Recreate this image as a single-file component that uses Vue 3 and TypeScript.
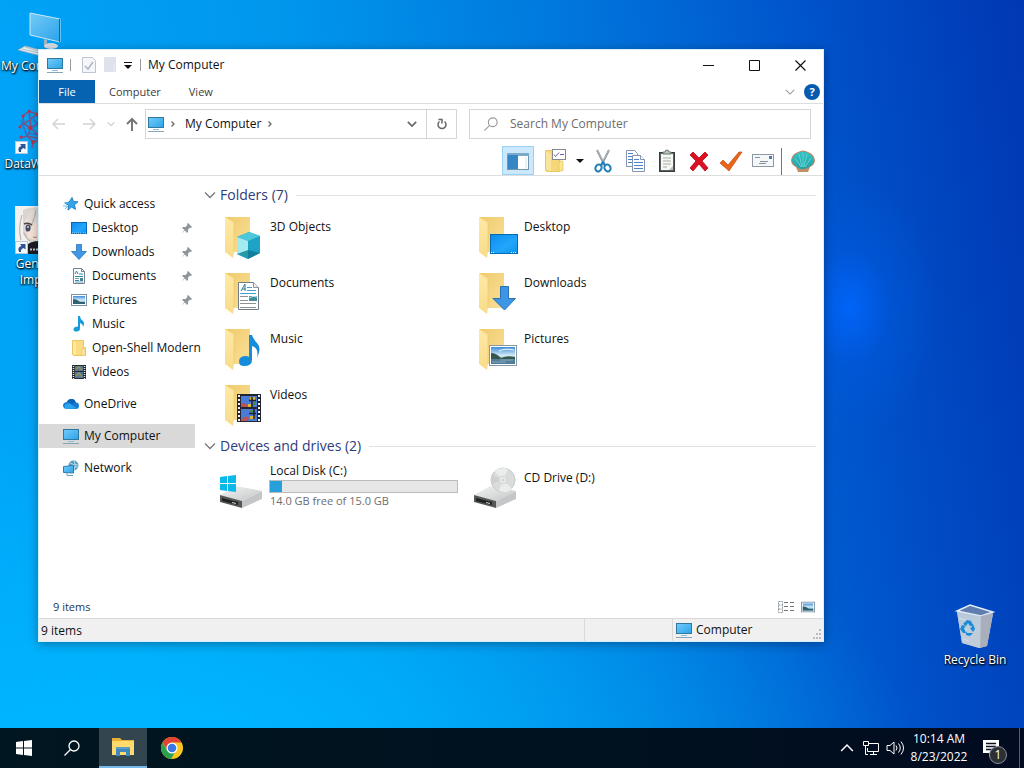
<script setup lang="ts">
import { computed, ref } from 'vue'

interface NavItem { label: string; icon: string; pinned?: boolean; level: 'root' | 'child' }
interface Tile { label: string; icon: string }
interface Tool { label: string; icon: string; pressed?: boolean }

const shortcuts: Tile[] = [
  { label: 'My Computer', icon: 'pc-large' },
  { label: 'DataWarrior', icon: 'molecule' },
  { label: 'Genshin Impact', icon: 'portrait' },
]

const navItems: NavItem[] = [
  { label: 'Quick access', icon: 'star', level: 'root' },
  { label: 'Desktop', icon: 'desktop', pinned: true, level: 'child' },
  { label: 'Downloads', icon: 'arrow', pinned: true, level: 'child' },
  { label: 'Documents', icon: 'document', pinned: true, level: 'child' },
  { label: 'Pictures', icon: 'picture', pinned: true, level: 'child' },
  { label: 'Music', icon: 'note', level: 'child' },
  { label: 'Open-Shell Modern', icon: 'folder', level: 'child' },
  { label: 'Videos', icon: 'film', level: 'child' },
  { label: 'OneDrive', icon: 'cloud', level: 'root' },
  { label: 'My Computer', icon: 'monitor', level: 'root' },
  { label: 'Network', icon: 'network', level: 'root' },
]
const selected = ref('monitor')

const folders: Tile[] = [
  { label: '3D Objects', icon: 'big-cube' },
  { label: 'Desktop', icon: 'big-desktop' },
  { label: 'Documents', icon: 'big-document' },
  { label: 'Downloads', icon: 'big-arrow' },
  { label: 'Music', icon: 'big-note' },
  { label: 'Pictures', icon: 'big-picture' },
  { label: 'Videos', icon: 'big-film' },
]

const editTools: Tool[] = [
  { label: 'Cut', icon: 'cut' },
  { label: 'Copy', icon: 'copy' },
  { label: 'Paste', icon: 'paste' },
  { label: 'Delete', icon: 'delete' },
  { label: 'Properties', icon: 'check' },
  { label: 'Email', icon: 'mail' },
]

const disk = { free: 14, total: 15 }
const usedPercent = computed(() => ((disk.total - disk.free) / disk.total) * 100)
const itemCount = computed(() => folders.length + 2)
const query = ref('')
</script>

<template>
  <svg class="sprite" aria-hidden="true">
    <defs>
      <linearGradient id="g-screen" x1="0" y1="0" x2="1" y2="1"><stop offset="0" stop-color="#73cbf8" /><stop offset="1" stop-color="#2ba3ea" /></linearGradient>
      <linearGradient id="g-blue" x1="0" y1="0" x2="1" y2="1"><stop offset="0" stop-color="#0c8cf0" /><stop offset=".6" stop-color="#22a6fb" /><stop offset="1" stop-color="#0a94f4" /></linearGradient>
      <linearGradient id="g-back" x1="0" y1="0" x2="1" y2="1"><stop offset="0" stop-color="#f0cb6c" /><stop offset="1" stop-color="#fbe09a" /></linearGradient>
      <linearGradient id="g-flap" x1="0" y1="0" x2="0" y2="1"><stop offset="0" stop-color="#ffe9a6" /><stop offset="1" stop-color="#f8dc8a" /></linearGradient>
      <linearGradient id="g-sky" x1="0" y1="0" x2="0" y2="1"><stop offset="0" stop-color="#3f8ed8" /><stop offset=".5" stop-color="#d3ebf7" /><stop offset="1" stop-color="#5c93b0" /></linearGradient>
      <linearGradient id="g-metal" x1="0" y1="0" x2="1" y2="1"><stop offset="0" stop-color="#f4f4f4" /><stop offset="1" stop-color="#c3c5c6" /></linearGradient>
      <linearGradient id="g-bin" x1="0" y1="0" x2="0" y2="1"><stop offset="0" stop-color="#a9c3df" /><stop offset="1" stop-color="#d8d7d5" /></linearGradient>
      <linearGradient id="g-shell" x1="0" y1="0" x2="0" y2="1"><stop offset="0" stop-color="#31c4c8" /><stop offset="1" stop-color="#2a9ea3" /></linearGradient>
    </defs>

    <symbol id="monitor" viewBox="0 0 16 16"><rect x=".5" y="1.500" width="15" height="10" fill="url(#g-screen)" stroke="#31789f" /><path d="M5 13.500h6" stroke="#8ac0dc" /><path d="M0 15.500h16" stroke="#8aa4b4" /></symbol>
    <symbol id="pc-large" viewBox="0 0 48 48"><path d="M15 5l30 6v23l-30-7z" fill="url(#g-screen)" stroke="#c9e8f7" /><path d="M44.500 11v23" stroke="#275f8c" /><path d="M32 32v6l-3 1v-8z" fill="#9fb7c6" /><ellipse cx="36" cy="38" rx="7" ry="3" fill="#d7dfe4" /><path d="M3 42l7-4 23 6-7 4z" fill="#e7edf0" stroke="#8baabd" stroke-width=".8" /><path d="M7 41l22 5M10 39l20 6" stroke="#9fb2bd" stroke-width=".8" /></symbol>
    <symbol id="molecule" viewBox="0 0 48 48"><g fill="none" stroke="#8f4773" stroke-width="1.500" opacity=".85"><path d="M8 10l6-5 8 3 2 9-8 5-7-4zM16 22l-4 8 6 6 9-3M22 8l8-4M24 17l10 4M9 17l-5 4M12 30l-7 2M18 36l-1 6M14 5l2 17M9 18l13-10M12 30l15 3M16 22l11 11" /></g><g fill="none" stroke="#4a62b4" stroke-width="1.500" opacity=".8"><path d="M18 13l9 12M13 27l10 2M27 25l8-6M27 32l7 7M6 14l6 16" /></g><g fill="#b9344c"><circle cx="8" cy="10" r="1.500" /><circle cx="14" cy="5" r="1.500" /><circle cx="5" cy="21" r="1.500" /><circle cx="15" cy="22" r="2" /><circle cx="18" cy="36" r="2" /><circle cx="22" cy="8" r="1.500" /><circle cx="24" cy="17" r="2" /><circle cx="6" cy="31" r="1.500" /></g></symbol>
    <symbol id="portrait" viewBox="0 0 48 48"><rect width="48" height="48" fill="#f3f1ef" /><path d="M8 4q6-4 38-2v42H34l-16-4-10-12z" fill="#dcd5cf" /><path d="M10 16q3-9 14-12l20 8v24H26L13 32z" fill="#f9e4d9" /><path d="M25 2q-2 16-15 26 0-16 6-24zM25 2q4 12 19 16V0z" fill="#e4ded8" /><path d="M21 4q-2 14-10 22M27 3q3 9 12 14M7 9Q3 22 6 34M9 27q2 6 6 8" fill="none" stroke="#b3a8a3" /><ellipse cx="13" cy="22" rx="2.500" ry="3.500" fill="#434865" /><circle cx="13" cy="21" r="1" fill="#cfd7e8" /><path d="M9 18q4-2 8 1" stroke="#4f4345" stroke-width="1.500" fill="none" /><path d="M18 31q2 1 4 0" stroke="#bf7c6c" fill="none" /><path d="M13 38q9-6 35-1v11H13z" fill="#1b1c25" /><path d="M15 43.500h9" stroke="#c8c7ca" stroke-width="2" stroke-dasharray="2 1" /></symbol>
    <symbol id="shortcut" viewBox="0 0 13 13"><rect x=".5" y=".5" width="12" height="12" fill="#f6fafd" stroke="#b3c8d8" /><path d="M4 11Q2 6 6.500 5L5 3h5.500v5.500L8.500 7Q5.500 8 6 11z" fill="#2d5595" /></symbol>

    <symbol id="star" viewBox="0 0 16 16"><path d="M9 1.500l1.500 4 4.500.3-3.500 3 1 4.500-4-2.200-3.500 3 .5-4.600L2 7l4.300-1z" fill="#37a4e8" stroke="#2384c6" /><path d="M1 7h4M0 10h4M2 13l3-3" stroke="#6dbfee" /></symbol>
    <symbol id="desktop" viewBox="0 0 16 16"><rect x=".5" y="2.500" width="15" height="11" fill="url(#g-blue)" stroke="#0966b5" /><path d="M1 13h10M12 13h3" stroke="#a7d7f6" stroke-dasharray="1 1" /></symbol>
    <symbol id="arrow" viewBox="0 0 16 16"><path d="M5.500.500h5v7h5L8 15.500.500 7.500h5z" fill="#3f97e6" stroke="#2875b7" stroke-width=".8" /></symbol>
    <symbol id="document" viewBox="0 0 16 16"><path d="M2.500.500h8l3 3v12h-11z" fill="#fff" stroke="#75828a" /><path d="M10.500.500v3h3" fill="none" stroke="#75828a" /><path d="M4 6l1.500-3L7 6M4 8.500h8M4 12.500h4M8 6h4" stroke="#2f8ca9" fill="none" /><path d="M4 10.500h4M4 14h8" stroke="#6d9eb2" /><rect x="9" y="10" width="3" height="3" fill="#418494" /></symbol>
    <symbol id="picture" viewBox="0 0 16 16"><rect x=".5" y="2.500" width="15" height="11" fill="#fff" stroke="#7993a6" /><rect x="2" y="4" width="12" height="8" fill="url(#g-sky)" /><path d="M2 7q4 0 7 3h5v2H2z" fill="#315f72" /></symbol>
    <symbol id="note" viewBox="0 0 16 16"><path d="M7 0h2q0 3 3 5 2 2 0 6 0-3-3-4v5.500q0 3-3.500 3-3 0-3-2 0-3 4.500-3z" fill="#189ade" /></symbol>
    <symbol id="folder" viewBox="0 0 16 16"><path d="M1.500.500h11v7h2v8H3l-1.500-1z" fill="#fbdc83" stroke="#edc85f" /><path d="M11 8.500h3v7h-3z" fill="#ffe9aa" stroke="#e6c15c" stroke-width=".6" /><path d="M2 1l3 2v12l-3-1z" fill="#ffe9a2" /></symbol>
    <symbol id="film" viewBox="0 0 16 16"><rect x="1" y="1" width="14" height="14" fill="#242931" /><path d="M4 2h8v5H4zM4 8h8v6H4z" fill="#5c7795" /><path d="M5 5l3-2 3 3M5 12l3-3 3 4" stroke="#8e9454" stroke-width="1.500" fill="none" /><path d="M2.500 2v13M13.500 2v13" stroke="#e4e4e4" stroke-width="1.500" stroke-dasharray="1 1" /></symbol>
    <symbol id="cloud" viewBox="0 0 16 16"><path d="M5 13Q0 13 0 9.500 0 6.500 4 6q1-3 5-3 3 0 4 3.500 3 0 3 3 0 3.500-3 3.500z" fill="#1479cf" /><path d="M4 13q-4-1-2-4.500L6 7l8 5.500z" fill="#2aa5ec" /><path d="M4 6q3 0 5 2l3-1.500Q12 3 8.500 3 5 3 4 6" fill="#0863b5" /></symbol>
    <symbol id="network" viewBox="0 0 16 16"><circle cx="10.500" cy="5.500" r="5" fill="#5a9cc0" /><path d="M7 3q3 2 8 2M11 1q3 4 0 9M6 7h9" stroke="#b5dbea" fill="none" /><path d="M.500 6.500l10-1v7.500l-10-.5z" fill="url(#g-screen)" stroke="#2d7dab" /><path d="M4 13v2.500h6" fill="none" stroke="#6ca2bd" /></symbol>
    <symbol id="pin" viewBox="0 0 12 12"><path d="M7 1l4 4-1 1-1-.5L7 7.500 7 10 6 11 4 8.500.800 11.500 3.500 8 1 6l1-1h2.500l2-2L6 2z" fill="#8c969e" /></symbol>

    <symbol id="big-folder" viewBox="0 0 48 48"><path d="M7 4h25v35H15z" fill="url(#g-back)" /><path d="M7 4l9 6v29l-1 6-8-6z" fill="url(#g-flap)" /><path d="M16 10v28" stroke="#edc86c" stroke-width=".7" /></symbol>
    <symbol id="big-cube" viewBox="0 0 48 48"><use href="#big-folder" /><path d="M19 24l12-5 11 4v17l-12 6-11-5z" fill="#1ea3c6" /><path d="M19 24l12-5 11 4-12 5z" fill="#4dc7da" /><path d="M19 24l11 4v18l-11-5z" fill="#a4ebef" /><path d="M19 41l11-4v9z" fill="#2699a7" /><path d="M30 37l12 3-12 6z" fill="#127f9b" /></symbol>
    <symbol id="big-desktop" viewBox="0 0 48 48"><use href="#big-folder" /><rect x="18.500" y="21.500" width="27" height="19" fill="url(#g-blue)" stroke="#0869ad" /><path d="M19 39.500h3M39 39.500h6" stroke="#e6f6ff" stroke-dasharray="1 1" /></symbol>
    <symbol id="big-document" viewBox="0 0 48 48"><use href="#big-folder" /><path d="M20.500 13.500h15l5 5v22h-20z" fill="#fff" stroke="#717d84" /><path d="M35.500 13.500v5h5" fill="#eee" stroke="#8b969c" /><path d="M23 22l4-7v7M24 20h4" fill="none" stroke="#287fa1" /><path d="M29 18.500h5M29 21.500h9M22 24.500h16" stroke="#459fd1" /><path d="M22 27.500h8M22 31.500h8M22 34.500h16M22 38.500h16" stroke="#8b9397" /><path d="M31 27h8v5h-8z" fill="#438c9b" /><path d="M31 29q4-3 8-1" stroke="#bee5ee" fill="none" /></symbol>
    <symbol id="big-arrow" viewBox="0 0 48 48"><use href="#big-folder" /><path d="M28.500 17.500h8v12h7l-11 11.500L21 29.500h7.500z" fill="#3c95e6" stroke="#2a72af" /></symbol>
    <symbol id="big-note" viewBox="0 0 48 48"><use href="#big-folder" /><path d="M31 10h3q1 4 5 8 5 5 0 15 2-10-5-12v14q0 6-8 6-5 0-5-4.500 0-5.500 7-5.500 2 0 3 1z" fill="#158ddb" /></symbol>
    <symbol id="big-picture" viewBox="0 0 48 48"><use href="#big-folder" /><rect x="17.500" y="20.500" width="27" height="20" fill="#fff" stroke="#8797a3" /><path d="M19 22h24v17H19z" fill="url(#g-sky)" /><path d="M19 28q5 0 10 5 6-3 14-1v2H19z" fill="#34584b" /><path d="M19 34h24v5H19z" fill="#507d98" /><path d="M20 37h14M28 35h13" stroke="#9dbbc9" stroke-width=".7" /><path d="M27 26q6-3 15-1" stroke="#e9f7fd" fill="none" /></symbol>
    <symbol id="big-film" viewBox="0 0 48 48"><use href="#big-folder" /><rect x="19" y="13" width="24" height="28" fill="#232632" /><path d="M23 15h16v11H23zM23 28h16v12H23z" fill="#4a7bd6" /><path d="M23 24q2-4 6 0v2h-6zM24 38q5-5 7 0l-3 2h-5z" fill="#c4504e" /><path d="M32 16h5v3h-5zM32 35h5v3h-5zM30 23h3v3h-3z" fill="#d9b92f" /><path d="M34 16v10M31 19.500h7M36 28v10M31 32.500h7" stroke="#20222a" stroke-width="1.500" /><path d="M35 21h3v3h-3zM32 29h3v2h-3z" fill="#438c47" /><path d="M21 14v27M41 14v27" stroke="#f2f2f2" stroke-width="2" stroke-dasharray="2 2" /></symbol>

    <symbol id="drive" viewBox="0 0 48 48"><path d="M2 33l16-9 26 5-20 10z" fill="url(#g-metal)" /><path d="M24 39l20-10v8l-20 9z" fill="#c4c6c8" /><path d="M2 33l22 6v7L2 40z" fill="#555859" /><path d="M4 36l16 4v3L4 39z" fill="#202222" /><path d="M14 40l4 1v1l-4-1z" fill="#d1ded3" /></symbol>
    <symbol id="disk-c" viewBox="0 0 48 48"><use href="#drive" /><path d="M2 15l7-1v7H2zM10 14l8-1v8h-8zM2 22h7v7l-7-1zM10 22h8v8l-8-1z" fill="#08b9ea" /></symbol>
    <symbol id="disk-d" viewBox="0 0 48 48"><use href="#drive" /><circle cx="31" cy="18" r="12" fill="#d9dbdc" stroke="#c6cacb" /><path d="M31 18L22 9q7-5 14-2zM31 18l9 9q-6 5-13 2z" fill="#eaedec" /><path d="M31 18l-11 4q-2-5 0-9z" fill="#cdd1d0" /><circle cx="31" cy="18" r="4" fill="#e9ebeb" stroke="#d0d4d3" /><circle cx="31" cy="18" r="1.500" fill="#d2d6d5" /></symbol>

    <symbol id="panes" viewBox="0 0 24 24"><rect x="1.500" y="4.500" width="21" height="16" fill="#fff" stroke="#7595ab" /><path d="M1 4h22v3H1z" fill="#7ea9c8" /><path d="M2 6h10v14H2z" fill="#3486c4" /><path d="M20 8v12" stroke="#d4e5ef" /></symbol>
    <symbol id="folder-options" viewBox="0 0 24 24"><path d="M1.500 1.500h14v21H3l-1.500-1z" fill="#f6d778" stroke="#e7c862" /><path d="M2 2l5 3v17l-5-2z" fill="#fae59c" /><path d="M15 12h4v10h-4z" fill="#ffe590" stroke="#d9bb58" stroke-width=".6" /><rect x="8.500" y=".5" width="13" height="10" fill="#fff" stroke="#85888f" /><path d="M10 5.500l1.500 2L15 3.500M16 5.500h4" fill="none" stroke="#795bad" /></symbol>
    <symbol id="cut" viewBox="0 0 24 24"><path d="M6 1l8 16M18 1l-8 16" stroke="#87919a" stroke-width="2" /><path d="M6 1l7 13M18 1l-7 13" stroke="#c4cbd0" stroke-width=".7" /><ellipse cx="7.500" cy="19" rx="3" ry="3.500" fill="none" stroke="#207fb8" stroke-width="2" transform="rotate(30 7.500 19)" /><ellipse cx="16.500" cy="19" rx="3" ry="3.500" fill="none" stroke="#207fb8" stroke-width="2" transform="rotate(-30 16.500 19)" /><path d="M10 16l2-3 2 3" fill="none" stroke="#207fb8" stroke-width="2" /></symbol>
    <symbol id="copy" viewBox="0 0 24 24"><g fill="#fff" stroke="#8294b1"><path d="M3.500 1.500h8l3 3v13h-11z" /><path d="M9.500 6.500h8l4 4v12h-12z" /><path d="M17.500 6.500v4h4" /></g><path d="M5 4.500h5M5 7.500h4M5 10.500h4M5 13.500h4M11 10.500h5M11 13.500h9M11 16.500h9M11 19.500h9" stroke="#4b83c7" /></symbol>
    <symbol id="paste" viewBox="0 0 24 24"><rect x="4.500" y="3.500" width="15" height="19" fill="#585f61" stroke="#373d40" /><path d="M6 5h12v16H6z" fill="#f7f8f3" /><path d="M8 5h8V3h-2q0-2-2-2t-2 2H8z" fill="#b9c7bd" stroke="#69766f" /><path d="M8 9h8M8 12h8M8 15h8M8 18h4" stroke="#a2afa8" /><path d="M14 21l4-4v4z" fill="#b9beb7" /></symbol>
    <symbol id="delete" viewBox="0 0 24 24"><path d="M3 6l3-3 6 6 6-6 3 3-6 6 6 7-3 3-6-7-6 7-3-3 6-7z" fill="#db1021" stroke="#b7081c" stroke-width=".8" /></symbol>
    <symbol id="check" viewBox="0 0 24 24"><path d="M1 14l3-3 5 5L20 3h3L10 22z" fill="#ea641b" stroke="#c9480b" stroke-width=".7" /></symbol>
    <symbol id="mail" viewBox="0 0 24 24"><rect x="1.500" y="5.500" width="21" height="12" fill="#f5f7f9" stroke="#8b98a6" /><path d="M4 8.500h5M9 12.500h8M8 14.500h7" stroke="#8292a0" /><rect x="18" y="7" width="3" height="3" fill="#547b9e" /></symbol>
    <symbol id="shell" viewBox="0 0 24 24"><path d="M0 11Q1 5 7 3q5-3 10 0 6 2 7 8 0 5-5 7l-2 5H7l-2-5Q0 16 0 11" fill="#c98660" /><path d="M1 11Q2 6 7 4q5-3 10 0 5 2 6 7 0 4-5 7l-3 2H9l-3-2Q1 15 1 11" fill="url(#g-shell)" /><path d="M10 18L4 9M11 18L8 5M12 18V4M13 18l3-13M14 18l6-9" stroke="#5fd6d4" /><path d="M7 19l5 2 5-2v4H7z" fill="#be9067" /></symbol>

    <symbol id="bin" viewBox="0 0 48 48"><path d="M6 10l5 31 17 5 8-2 6-32-9-5-14-4z" fill="url(#g-bin)" /><path d="M6 9l13-6 23 7-12 4z" fill="#5f7dae" stroke="#e4eff8" stroke-width="1.500" /><path d="M6 10l24 4-1 32-18-5z" fill="#bccadb" opacity=".8" /><path d="M30 14l12-3-6 33-7 2z" fill="#a9aebb" /><path d="M8 16l7 2M9 25l7 3M12 37l6 2" stroke="#d7dfe9" /><g fill="#198bd9"><path d="M12 22l4-4 4 1 2 4-3 1-2-3-2 3z" /><path d="M22 22l2 5-2 3-3-4 2-1-1-2z" /><path d="M11 23l4 1-2 2 2 5h-3l-3-4z" /><path d="M15 29l1 2h6l-3 3-4-1z" /></g></symbol>
    <symbol id="windows" viewBox="0 0 16 16"><path d="M0 2l7-1v6.500H0zM8 1l8-1v7.500H8zM0 8.500h7V15l-7-1zM8 8.500h8V16l-8-1z" fill="#fff" /></symbol>
    <symbol id="magnifier" viewBox="0 0 16 16"><circle cx="10" cy="6" r="5" fill="none" stroke="currentColor" stroke-width="1.300" /><path d="M6.500 9.500L.500 15.500" stroke="currentColor" stroke-width="1.300" /></symbol>
    <symbol id="explorer" viewBox="0 0 24 24"><path d="M1 3h8l2 2h12v6H1z" fill="#e8ae36" /><path d="M1 6h22v14H1z" fill="#ffda6c" /><path d="M5 12h14v9h-4v-4H9v4H5z" fill="#3f88bd" /><path d="M5 12h14v2H5z" fill="#5d9dc5" /></symbol>
    <symbol id="chrome" viewBox="0 0 24 24"><circle cx="12" cy="12" r="11" fill="#fbc61d" /><path d="M2.500 6.500A11 11 0 0 1 21.500 6.500H12L7.500 14z" fill="#e44234" /><path d="M2.500 6.500A11 11 0 0 0 11 23l5-8.500L12 17l-4.500-2z" fill="#2ba14d" /><circle cx="12" cy="12" r="5.500" fill="#fff" /><circle cx="12" cy="12" r="4.300" fill="#3979e7" /></symbol>
    <symbol id="lan" viewBox="0 0 18 16"><path d="M6 3.500h10.500v8H5.500V8M8 14.500h7M11.500 11.500v3M3.500 7v7.500H6M1.500 1.500h5v4h-5zM3.500 5.500v2" fill="none" stroke="#fff" /></symbol>
    <symbol id="speaker" viewBox="0 0 18 16"><path d="M1 5.500h3L8 2v12l-4-3.500H1zM10 5.500q2 2.500 0 5M12.500 3.500q3.500 4.500 0 9M15 1.500q5 6.500 0 13" fill="none" stroke="#fff" /></symbol>
    <symbol id="message" viewBox="0 0 18 18"><path d="M1 1h16v13h-6l-4 4v-4H1z" fill="#fff" /><path d="M4 4.500h10M4 7.500h10M4 10.500h7" stroke="#071323" stroke-width="1.300" /></symbol>
    <symbol id="chevron" viewBox="0 0 12 12"><path d="M1 3.500l5 5 5-5" fill="none" stroke="currentColor" stroke-width="1.300" /></symbol>
    <symbol id="chevron-bold" viewBox="0 0 12 12"><path d="M1 3.500l5 5 5-5" fill="none" stroke="currentColor" stroke-width="2" /></symbol>
    <symbol id="chevron-right" viewBox="0 0 8 8"><path d="M2.500 1.500l2.500 2.500-2.500 2.500" fill="none" stroke="currentColor" stroke-width="1.300" /></symbol>
    <symbol id="arrow-line" viewBox="0 0 14 14"><path d="M13 7H1M6 2L1 7l5 5" fill="none" stroke="currentColor" stroke-width="1.500" /></symbol>
    <symbol id="arrow-up" viewBox="0 0 14 14"><path d="M7 14V2M2 7l5-5 5 5" fill="none" stroke="currentColor" stroke-width="2" /></symbol>
    <symbol id="caret" viewBox="0 0 8 8"><path d="M0 2h8L4 6z" fill="currentColor" /></symbol>
    <symbol id="refresh" viewBox="0 0 14 14"><path d="M9.500 4.500a4 4 0 1 1-5 0M3.500 2.500H7v4" fill="none" stroke="currentColor" stroke-width="1.500" /></symbol>
  </svg>

  <div class="screen">
    <main class="desktop">
      <a v-for="s in shortcuts" :key="s.icon" href="#" class="shortcut" :class="s.icon">
        <span class="shortcut-art">
          <svg class="i48"><use :href="'#' + s.icon" /></svg>
          <svg v-if="s.icon !== 'pc-large'" class="overlay"><use href="#shortcut" /></svg>
        </span>
        <span class="shortcut-label">{{ s.label }}</span>
      </a>
      <a href="#" class="shortcut bin">
        <span class="shortcut-art"><svg class="i48"><use href="#bin" /></svg></span>
        <span class="shortcut-label">Recycle Bin</span>
      </a>

      <section class="window" aria-label="My Computer">
        <header class="titlebar">
          <svg class="i16"><use href="#monitor" /></svg>
          <span class="rule"></span>
          <button class="quick" aria-label="Properties"><svg viewBox="0 0 14 16"><path d="M.500.500h10l3 3v12H.500z" fill="#f4f6fa" stroke="#bdc5d3" /><path d="M3 9l3 3 5-7" fill="none" stroke="#acb4c6" stroke-width="1.500" /></svg></button>
          <button class="quick" aria-label="New folder"><svg viewBox="0 0 14 16"><path d="M1 0h12v15H1z" fill="#dfe2ec" /><path d="M11 8v7" stroke="#edf0f5" /></svg></button>
          <button class="customize" aria-label="Customize toolbar"><svg viewBox="0 0 8 8"><path d="M0 1.500h8" stroke="#111" /><path d="M0 4h8L4 8z" fill="#111" /></svg></button>
          <span class="rule near"></span>
          <h1>My Computer</h1>
          <div class="captions">
            <button aria-label="Minimize"><svg viewBox="0 0 11 11"><path d="M0 5.500h11" stroke="#111" /></svg></button>
            <button aria-label="Maximize"><svg viewBox="0 0 11 11"><path d="M.500.500h10v10H.500z" fill="none" stroke="#111" /></svg></button>
            <button aria-label="Close"><svg viewBox="0 0 11 11"><path d="M.500.500l10 10M10.500.500l-10 10" stroke="#111" stroke-width="1.200" /></svg></button>
          </div>
        </header>

        <nav class="tabs" aria-label="Ribbon">
          <button class="file">File</button>
          <button>Computer</button>
          <button>View</button>
          <button class="expand" aria-label="Expand ribbon"><svg class="i10"><use href="#chevron" /></svg></button>
          <button class="help" aria-label="Help">?</button>
        </nav>

        <div class="locate">
          <button class="step dim" aria-label="Back"><svg class="i14"><use href="#arrow-line" /></svg></button>
          <button class="step dim forward" aria-label="Forward"><svg class="i14"><use href="#arrow-line" /></svg></button>
          <button class="recent dim" aria-label="Recent locations"><svg class="i8"><use href="#chevron-bold" /></svg></button>
          <button class="up" aria-label="Up"><svg class="i14"><use href="#arrow-up" /></svg></button>
          <div class="address">
            <svg class="i16"><use href="#monitor" /></svg>
            <svg class="i8 crumb"><use href="#chevron-right" /></svg>
            <a href="#">My Computer</a>
            <svg class="i8"><use href="#chevron-right" /></svg>
            <button class="drop" aria-label="Previous locations"><svg class="i10"><use href="#chevron-bold" /></svg></button>
            <button class="refresh" aria-label="Refresh"><svg class="i14"><use href="#refresh" /></svg></button>
          </div>
          <label class="search">
            <svg class="i14"><use href="#magnifier" /></svg>
            <input v-model="query" type="text" placeholder="Search My Computer" aria-label="Search My Computer" />
          </label>
        </div>

        <div class="toolbar" role="toolbar" aria-label="Commands">
          <button class="tool pressed" aria-label="Navigation pane" aria-pressed="true"><svg class="i24"><use href="#panes" /></svg></button>
          <button class="tool options" aria-label="Folder options"><svg class="i24"><use href="#folder-options" /></svg></button>
          <button class="more" aria-label="More options"><svg class="i8"><use href="#caret" /></svg></button>
          <button v-for="t in editTools" :key="t.icon" class="tool" :aria-label="t.label"><svg class="i24"><use :href="'#' + t.icon" /></svg></button>
          <span class="divider"></span>
          <button class="tool" aria-label="Classic Explorer settings"><svg class="i24"><use href="#shell" /></svg></button>
        </div>

        <div class="body">
          <nav class="tree" aria-label="Locations">
            <a
              v-for="item in navItems"
              :key="item.icon"
              href="#"
              :class="[item.level, { selected: item.icon === selected }]"
              @click.prevent="selected = item.icon"
            >
              <svg class="i16"><use :href="'#' + item.icon" /></svg>
              <span>{{ item.label }}</span>
              <svg v-if="item.pinned" class="pin"><use href="#pin" /></svg>
            </a>
          </nav>

          <div class="content">
            <h2><svg class="i12"><use href="#chevron" /></svg>Folders (7)</h2>
            <div class="tiles">
              <a v-for="f in folders" :key="f.icon" href="#" class="tile">
                <svg class="i48"><use :href="'#' + f.icon" /></svg>
                <span>{{ f.label }}</span>
              </a>
            </div>
            <h2><svg class="i12"><use href="#chevron" /></svg>Devices and drives (2)</h2>
            <div class="tiles drives">
              <a href="#" class="tile">
                <svg class="i48"><use href="#disk-c" /></svg>
                <div class="usage">
                  <span>Local Disk (C:)</span>
                  <div class="gauge" role="img" aria-label="Used space"><div :style="{ width: usedPercent + '%' }"></div></div>
                  <small>{{ disk.free.toFixed(1) }} GB free of {{ disk.total.toFixed(1) }} GB</small>
                </div>
              </a>
              <a href="#" class="tile">
                <svg class="i48"><use href="#disk-d" /></svg>
                <span>CD Drive (D:)</span>
              </a>
            </div>
          </div>
        </div>

        <div class="summary">
          <span>{{ itemCount }} items</span>
          <button aria-label="Details view"><svg class="details" viewBox="0 0 18 14"><path d="M1.500 1.500h4v11h-4zM1.500 5h4M1.500 9h4" fill="none" stroke="#8b9297" stroke-dasharray="2 1" /><path d="M7 2.500h4M13 2.500h4M7 6.500h4M13 6.500h4M7 10.500h4M13 10.500h4" stroke="#6f7579" /></svg></button>
          <button aria-label="Large icons"><svg class="i14"><use href="#picture" /></svg></button>
        </div>

        <footer class="status">
          <span class="count">{{ itemCount }} items</span>
          <span class="blank"></span>
          <span class="zone"><svg class="i16"><use href="#monitor" /></svg>Computer</span>
          <svg class="grip" viewBox="0 0 10 10"><path d="M7 0h2v2H7zM4 4h2v2H4zM7 4h2v2H7zM1 8h2v2H1zM4 8h2v2H4zM7 8h2v2H7z" fill="#bcbcbc" /></svg>
        </footer>
      </section>
    </main>

    <footer class="taskbar">
      <button aria-label="Start"><svg class="i16"><use href="#windows" /></svg></button>
      <button aria-label="Search"><svg class="i16"><use href="#magnifier" /></svg></button>
      <button class="running" aria-label="File Explorer"><svg class="i24"><use href="#explorer" /></svg></button>
      <button class="browser" aria-label="Chrome"><svg class="i24"><use href="#chrome" /></svg></button>
      <div class="tray">
        <button aria-label="Hidden icons" class="flip"><svg class="i14"><use href="#chevron" /></svg></button>
        <button aria-label="Network"><svg class="i18"><use href="#lan" /></svg></button>
        <button aria-label="Volume"><svg class="i18"><use href="#speaker" /></svg></button>
        <time datetime="2022-08-23T10:14"><span>10:14 AM</span><span>8/23/2022</span></time>
        <button class="notices" aria-label="Notifications"><svg class="i18"><use href="#message" /></svg><span class="badge">1</span></button>
        <span class="peek"></span>
      </div>
    </footer>
  </div>
</template>

<style>
body { margin: 0; }
</style>

<style scoped>
.screen {
  display: flex;
  flex-direction: column;
  height: 100vh;
  min-height: 680px;
  overflow: hidden;
  font: 12px/16px "Open Sans", "Noto Sans", sans-serif;
  color: #111;
  background:
    radial-gradient(ellipse 90px 130px at 83% 40%, #0064f8 0%, #005ae070 45%, #0050d000 100%),
    radial-gradient(ellipse 75% 45% at 15% 100%, #00b8ff 0%, #00b0ff00 100%),
    linear-gradient(82deg, #00a6f8 0%, #00a2f6 12%, #0096ec 35%, #0076dc 60%, #0054cc 80%, #0042bc 92%, #0038b2 100%);
}
.sprite { position: absolute; width: 0; height: 0; }
svg { display: block; flex: none; }
button { display: flex; align-items: center; justify-content: center; margin: 0; padding: 0; border: 0; background: none; font: inherit; color: inherit; }
a { color: inherit; text-decoration: none; }
h1, h2 { margin: 0; font-weight: 400; }
.i8 { width: 8px; height: 8px; }
.i10 { width: 10px; height: 10px; }
.i12 { width: 12px; height: 12px; }
.i14 { width: 14px; height: 14px; }
.i16 { width: 16px; height: 16px; }
.i18 { width: 18px; height: 18px; }
.i24 { width: 24px; height: 24px; }
.i48 { width: 48px; height: 48px; }

.desktop { position: relative; flex: 1; min-height: 0; }
.shortcut { position: absolute; left: 0; width: 78px; display: flex; flex-direction: column; align-items: center; gap: 2px; color: #fff; text-align: center; text-shadow: 1px 1px 2px #000, 0 1px 2px #000; }
.shortcut.pc-large { top: 8px; white-space: nowrap; }
.shortcut.molecule { top: 106px; }
.shortcut.portrait { top: 206px; }
.shortcut.bin { left: auto; right: 10px; top: 602px; }
.shortcut-art { position: relative; }
.overlay { position: absolute; left: 0; bottom: 0; width: 13px; height: 13px; }
.shortcut-label { max-width: 76px; }
.portrait .shortcut-label { width: 60px; }

.window { position: absolute; top: 49px; right: 200px; bottom: 86px; left: 38px; box-sizing: border-box; display: flex; flex-direction: column; overflow: hidden; border: 1px solid #d5eefb; background: #fff; box-shadow: 0 2px 10px #0005; }
.titlebar { display: flex; align-items: center; height: 30px; padding-left: 8px; }
.rule { width: 1px; height: 12px; margin: 0 11px 0 7px; background: #999; }
.rule.near { margin: 0 7px 0 8px; }
.quick { margin-right: 7px; }
.quick svg { width: 14px; height: 16px; }
.customize svg { width: 8px; height: 8px; }
h1 { flex: 1; font-size: 12px; line-height: 16px; }
.captions { display: flex; align-self: stretch; }
.captions button { width: 46px; }
.captions svg { width: 11px; height: 11px; }

.tabs { display: flex; align-items: center; height: 23px; border-bottom: 1px solid #dcdddd; font-size: 11px; color: #3d3d3d; padding-right: 3px; }
.tabs button { padding: 0 14px; }
.tabs .file { align-self: stretch; padding: 0; width: 56px; background: #0563b1; color: #fff; }
.tabs .expand { margin-left: auto; padding: 0 9px; color: #999; }
.tabs .help { width: 16px; height: 16px; padding: 0; border-radius: 50%; background: #075baf; color: #fff; font-weight: 700; }

.locate { display: grid; grid-template-columns: 30px 26px 12px 26px minmax(0, 312fr) minmax(0, 354fr); align-items: center; height: 40px; padding: 0 12px; }
.step { justify-content: flex-start; padding-left: 1px; }
.dim { color: #d4d4d4; }
.recent { justify-content: flex-start; }
.up { color: #777; }
.forward svg { transform: rotate(180deg); }
.address { display: flex; align-items: center; box-sizing: border-box; height: 30px; padding-left: 2px; border: 1px solid #d5d5d5; color: #666; }
.address a { margin: 0 5px 0 8px; color: #111; }
.crumb { margin-left: 5px; }
.drop { width: 28px; height: 28px; margin-left: auto; }
.refresh { width: 30px; height: 28px; box-sizing: border-box; border-left: 1px solid #d5d5d5; }
.search { display: flex; align-items: center; gap: 12px; box-sizing: border-box; height: 30px; margin-left: 12px; padding-left: 14px; border: 1px solid #d5d5d5; color: #999; }
.search input { flex: 1; min-width: 0; border: 0; outline: 0; padding: 0; background: none; font: inherit; color: #111; }
.search input::placeholder { color: #6d6d6d; opacity: 1; }

.toolbar { display: flex; align-items: flex-end; justify-content: flex-end; height: 31px; padding-right: 4px; border-bottom: 1px solid #dedede; }
.tool { width: 32px; height: 29px; box-sizing: border-box; }
.tool.pressed { margin-right: 6px; border: 1px solid #99d1f5; background: #cce8ff; }
.more { width: 15px; height: 29px; }
.divider { width: 1px; height: 27px; margin: 0 5px 0 2px; background: #777; }

.body { display: flex; flex: 1; min-height: 0; }
.tree { display: flex; flex-direction: column; width: 156px; flex: none; padding-top: 16px; }
.tree a { display: flex; align-items: center; height: 24px; white-space: nowrap; }
.tree .root { padding-left: 24px; gap: 5px; }
.tree .child { padding-left: 32px; gap: 5px; }
.tree .child + .root, .tree .root + .root { margin-top: 8px; }
.tree .selected { background: #d9d9d9; }
.pin { width: 12px; height: 12px; margin-left: auto; margin-right: 2px; }

.content { flex: 1; min-width: 0; padding: 8px 7px 0 9px; }
h2 { display: flex; align-items: center; gap: 4px; height: 22px; font-size: 14px; line-height: 22px; color: #2d3c7c; }
h2 svg { color: #777; }
h2::after { content: ""; flex: 1; height: 1px; margin-left: 4px; background: #e2e2e2; }
.tiles { display: grid; grid-template-columns: repeat(auto-fill, 254px); padding: 5px 0 0 14px; }
.tile { display: flex; height: 56px; padding-top: 2px; box-sizing: border-box; gap: 4px; }
.tile > span { margin-top: 6px; }
.drives .tile { padding-top: 0; }
.drives .tile > span { margin-top: 8px; }
.usage { display: flex; flex-direction: column; width: 189px; margin-left: -1px; padding-top: 1px; }
.usage span, .usage small { padding-left: 1px; }
.usage small { color: #6d6d6d; font-size: 11px; line-height: 16px; }
.gauge { height: 11px; margin-top: 1px; border: 1px solid #bcbcbc; background: #e6e6e6; }
.gauge div { height: 100%; background: #26a0da; }

.summary { display: flex; align-items: center; gap: 6px; height: 22px; padding: 0 8px 0 14px; font-size: 11px; color: #24354f; }
.summary span { margin-right: auto; }
.details { width: 18px; height: 16px; }
.status { display: flex; height: 22px; border-top: 1px solid #d9d9d9; background: #f0f0f0; line-height: 24px; }
.count { flex: 1; padding-left: 2px; }
.blank { width: 89px; box-sizing: border-box; border: solid #d9d9d9; border-width: 0 1px; }
.zone { display: flex; align-items: center; gap: 4px; box-sizing: border-box; width: 139px; padding-left: 3px; }
.grip { align-self: flex-end; width: 10px; height: 10px; margin: 0 1px 2px 0; }

.taskbar { display: flex; flex: none; height: 40px; color: #fff; background: linear-gradient(90deg, #001620, #00111f 60%, #020b20); }
.taskbar > button { width: 48px; }
.taskbar > .running { box-sizing: border-box; margin-left: 3px; border-bottom: 2px solid #76b9ed; background: #33464f; }
.taskbar > .browser { width: 50px; }
.tray { display: flex; align-items: center; margin-left: auto; }
.tray button { width: 24px; height: 40px; }
.tray .flip svg { transform: rotate(180deg); }
time { display: flex; flex-direction: column; width: 64px; text-align: center; line-height: 18px; }
.tray .notices { position: relative; width: 40px; }
.badge { position: absolute; right: 4px; bottom: 4px; width: 16px; height: 16px; border: 1px solid #8a9095; border-radius: 50%; background: #2b3036; line-height: 16px; }
.peek { width: 4px; height: 40px; margin-left: 8px; border-left: 1px solid #50606e; }
</style>
